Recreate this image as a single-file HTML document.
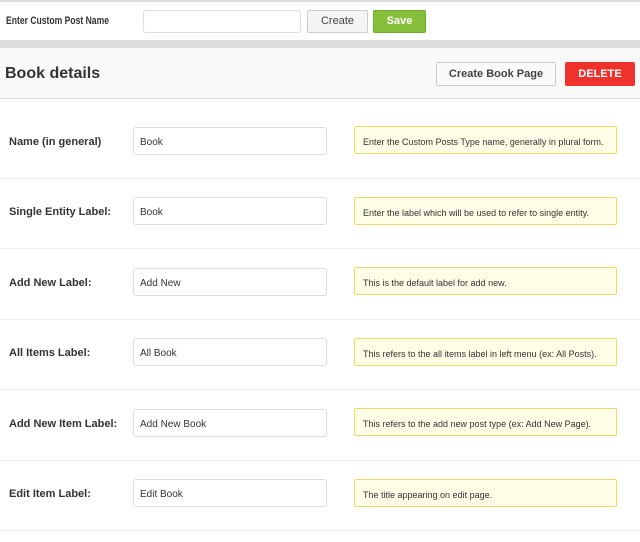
<!DOCTYPE html>
<html><head><style>
*{box-sizing:border-box;margin:0;padding:0}
body{width:640px;height:542px;background:#fff;font-family:"Liberation Sans",Arial,sans-serif;position:relative;overflow:hidden;color:#333}
.a{position:absolute}
.lbl{font-size:11px;font-weight:bold;color:#333;left:9px}
.inp{left:133px;width:194px;height:28px;border:1px solid #ddd;border-radius:3px;font-size:10px;padding:9px 0 0 6px;color:#333}
.tip{left:354px;width:263px;height:28px;border:1px solid #eadc6a;background:#fefde6;font-size:9px;padding:10px 0 0 8px;color:#333;border-radius:2px}
.sep{left:0;width:640px;height:1px;background:#eee}
</style></head><body>
<div class="a" style="left:0;top:0;width:640px;height:2px;background:#ddd"></div>
<div class="a" style="left:6px;top:15px;font-size:11px;font-weight:bold;transform:scaleX(0.78);transform-origin:left;white-space:nowrap">Enter Custom Post Name</div>
<div class="a" style="left:143px;top:10px;width:158px;height:23px;border:1px solid #ddd;border-radius:3px"></div>
<div class="a" style="left:307px;top:10px;width:61px;height:23px;border:1px solid #ccc;border-radius:2px;background:#f4f4f4;font-size:11px;text-align:center;line-height:21px;color:#444">Create</div>
<div class="a" style="left:373px;top:10px;width:53px;height:23px;border:1px solid #6fad2e;border-radius:2px;background:#86c03a;font-size:11px;font-weight:bold;color:#fff;text-align:center;line-height:21px">Save</div>
<div class="a" style="left:0;top:40px;width:640px;height:8px;background:#ddd"></div>
<div class="a" style="left:0;top:48px;width:640px;height:51px;background:#f9f9f9;border-bottom:1px solid #ddd"></div>
<div class="a" style="left:5px;top:65px;font-size:16px;font-weight:bold;color:#333">Book details</div>
<div class="a" style="left:436px;top:62px;width:120px;height:24px;border:1px solid #ccc;border-radius:2px;background:#fafafa;font-size:11px;font-weight:bold;color:#444;text-align:center;line-height:22px">Create Book Page</div>
<div class="a" style="left:565px;top:62px;width:70px;height:24px;background:#f0322d;border-radius:2px;font-size:11px;font-weight:bold;color:#fff;text-align:center;line-height:24px">DELETE</div>

<div class="a lbl" style="top:136px">Name (in general)</div>
<div class="a inp" style="top:127px">Book</div>
<div class="a tip" style="top:126px">Enter the Custom Posts Type name, generally in plural form.</div>
<div class="a sep" style="top:178px"></div>

<div class="a lbl" style="top:206px">Single Entity Label:</div>
<div class="a inp" style="top:197px">Book</div>
<div class="a tip" style="top:197px">Enter the label which will be used to refer to single entity.</div>
<div class="a sep" style="top:248px"></div>

<div class="a lbl" style="top:277px">Add New Label:</div>
<div class="a inp" style="top:268px">Add New</div>
<div class="a tip" style="top:267px">This is the default label for add new.</div>
<div class="a sep" style="top:319px"></div>

<div class="a lbl" style="top:347px">All Items Label:</div>
<div class="a inp" style="top:338px">All Book</div>
<div class="a tip" style="top:338px">This refers to the all items label in left menu (ex: All Posts).</div>
<div class="a sep" style="top:389px"></div>

<div class="a lbl" style="top:418px">Add New Item Label:</div>
<div class="a inp" style="top:409px">Add New Book</div>
<div class="a tip" style="top:408px">This refers to the add new post type (ex: Add New Page).</div>
<div class="a sep" style="top:460px"></div>

<div class="a lbl" style="top:488px">Edit Item Label:</div>
<div class="a inp" style="top:479px">Edit Book</div>
<div class="a tip" style="top:479px">The title appearing on edit page.</div>
<div class="a sep" style="top:530px"></div>
</body></html>
